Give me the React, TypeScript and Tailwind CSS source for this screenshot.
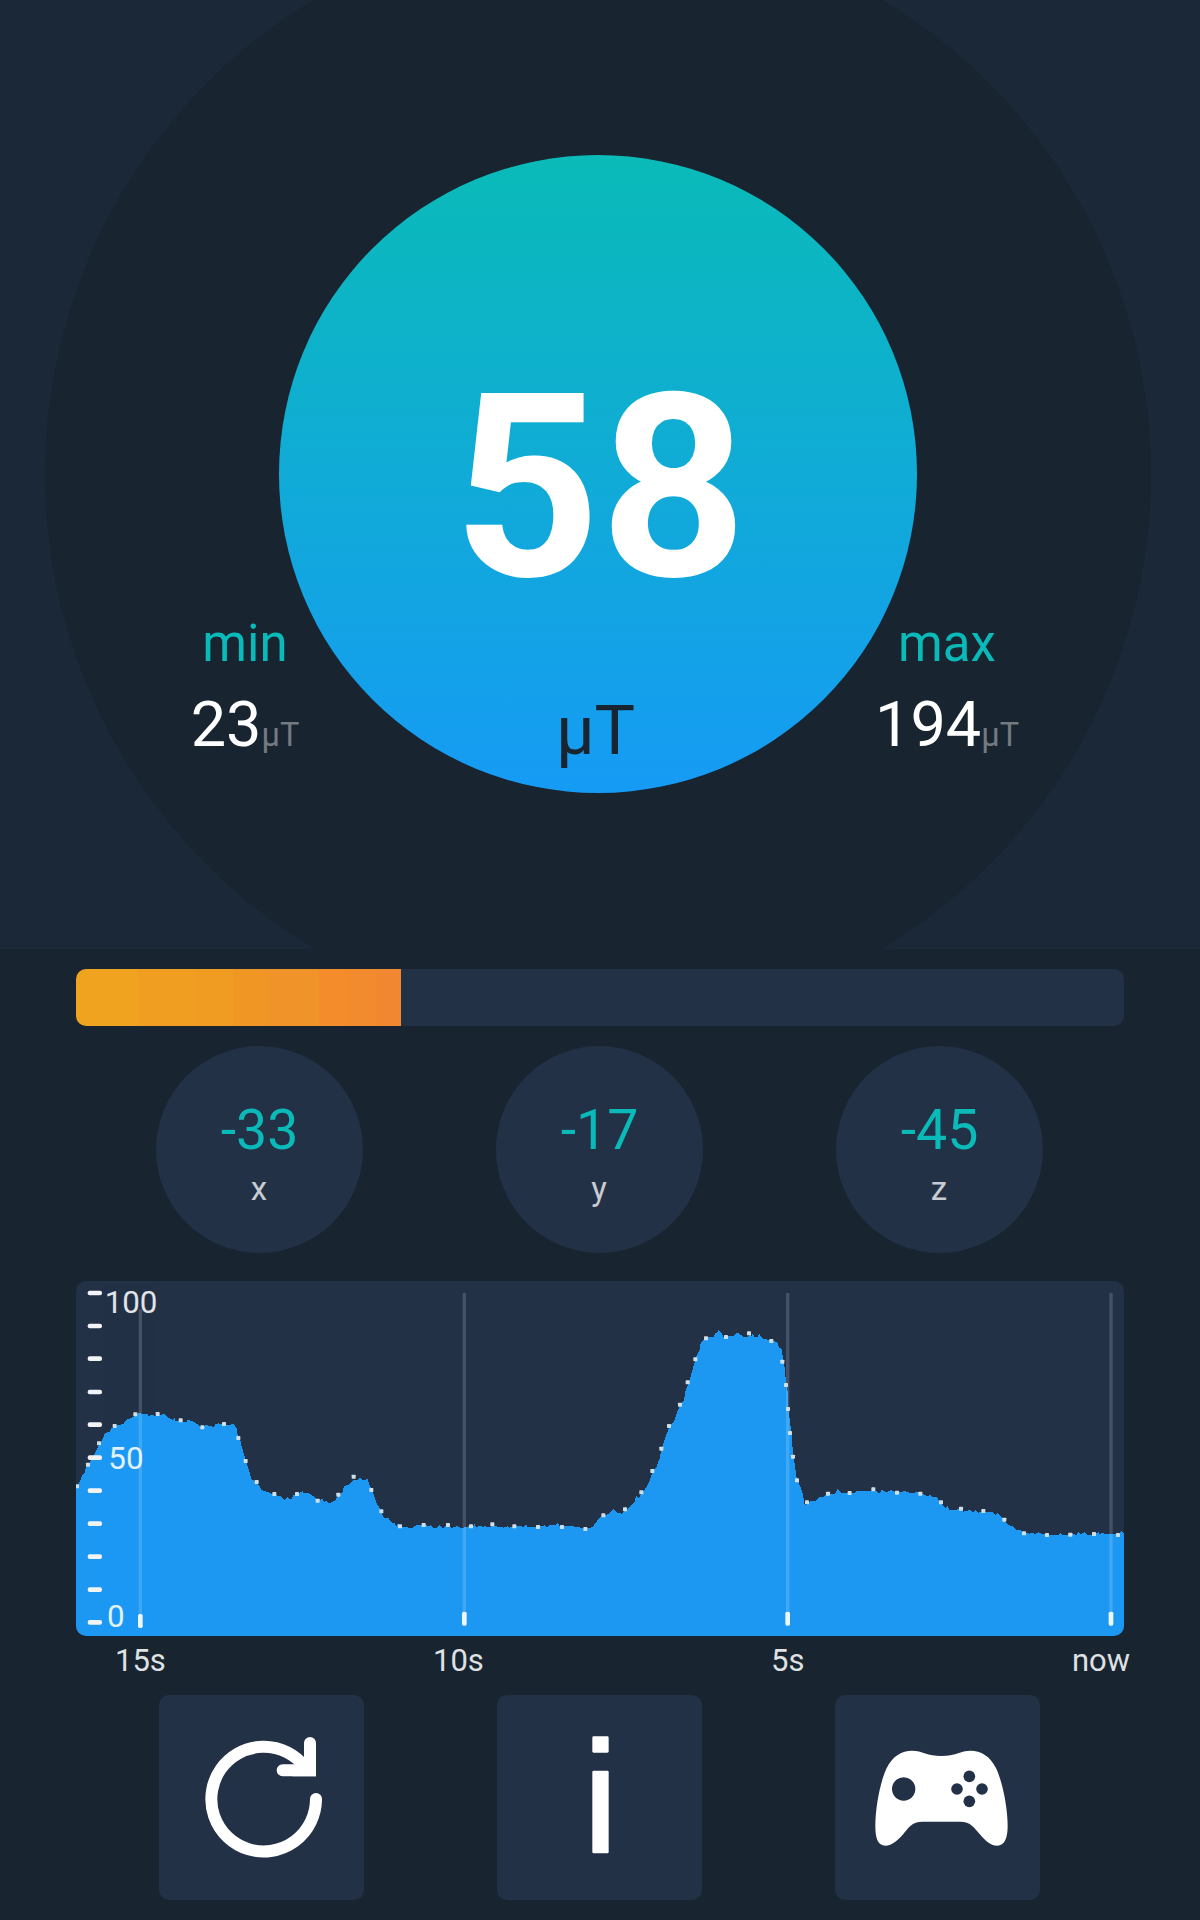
import React from "react";

// Chart coordinates use three units per CSS pixel.
const CHART_TOP = 33;
const CHART_BOTTOM = 1098;
const CHART_LEFT = 48;
const CHART_RIGHT = 3192;

const curve: number[][] = [
  [48, 650], [60, 635], [66, 616], [75, 608], [78, 588], [85, 583], [100, 562], [108, 542], [115, 530], [124, 514],
  [135, 490], [150, 484], [154, 476], [163, 468], [190, 462], [200, 449], [213, 445], [225, 438], [235, 430], [263, 432],
  [266, 440], [272, 434], [288, 438], [300, 436], [312, 432], [325, 443], [338, 450], [343, 443], [347, 453], [362, 455],
  [380, 456], [383, 449], [400, 455], [412, 463], [425, 472], [438, 464], [450, 470], [453, 466], [459, 473], [466, 463],
  [475, 460], [490, 464], [510, 466], [514, 461], [522, 463], [530, 475], [535, 508], [541, 512], [545, 530], [557, 570],
  [575, 628], [590, 635], [605, 660], [616, 663], [630, 669], [643, 675], [662, 678], [675, 690], [682, 680], [688, 688],
  [696, 686], [700, 675], [715, 672], [727, 663], [730, 668], [745, 669], [760, 678], [773, 692], [788, 686], [792, 695],
  [800, 694], [808, 700], [825, 691], [835, 678], [848, 665], [852, 648], [870, 642], [881, 630], [895, 629], [900, 621],
  [905, 629], [918, 629], [921, 624], [933, 656], [941, 672], [950, 700], [957, 712], [965, 730], [972, 745], [985, 744],
  [995, 758], [1005, 760], [1008, 770], [1014, 760], [1022, 770], [1038, 770], [1045, 773], [1058, 773], [1069, 766],
  [1100, 766], [1104, 770], [1112, 766], [1118, 773], [1131, 773], [1138, 766], [1150, 775], [1158, 768], [1176, 773],
  [1192, 768], [1204, 774], [1220, 771], [1234, 766], [1238, 773], [1244, 761], [1248, 772], [1262, 767], [1270, 773],
  [1276, 767], [1280, 773], [1300, 768], [1332, 773], [1344, 768], [1347, 773], [1365, 768], [1392, 770], [1398, 762],
  [1402, 770], [1430, 770], [1438, 764], [1442, 770], [1455, 766], [1460, 773], [1469, 765], [1488, 765], [1492, 759],
  [1500, 769], [1534, 768], [1558, 772], [1570, 776], [1592, 774], [1600, 768], [1608, 757], [1615, 748], [1624, 740],
  [1642, 734], [1656, 722], [1661, 718], [1670, 728], [1684, 731], [1696, 722], [1715, 705], [1724, 694], [1728, 676],
  [1736, 684], [1744, 672], [1756, 656], [1768, 636], [1778, 606], [1790, 589], [1799, 565], [1806, 532], [1816, 502],
  [1822, 486], [1830, 467], [1842, 453], [1850, 430], [1862, 404], [1872, 390], [1877, 360], [1885, 342], [1894, 312],
  [1904, 276], [1912, 252], [1919, 238], [1922, 219], [1932, 207], [1944, 202], [1961, 201], [1965, 190], [1971, 187],
  [1976, 179], [1984, 188], [1990, 200], [2018, 199], [2025, 193], [2031, 187], [2041, 194], [2050, 200], [2064, 200],
  [2069, 189], [2075, 198], [2078, 192], [2083, 200], [2093, 202], [2097, 190], [2107, 205], [2125, 210], [2151, 216],
  [2158, 233], [2165, 237], [2170, 272], [2175, 300], [2178, 343], [2183, 365], [2185, 420], [2190, 455], [2194, 490],
  [2199, 548], [2204, 582], [2209, 620], [2220, 648], [2228, 671], [2234, 705], [2241, 706], [2246, 695], [2268, 692],
  [2280, 680], [2290, 682], [2296, 674], [2308, 674], [2326, 670], [2332, 658], [2344, 668], [2383, 669], [2392, 662],
  [2434, 662], [2446, 662], [2459, 670], [2465, 659], [2478, 667], [2495, 660], [2500, 664], [2510, 669], [2535, 663],
  [2550, 669], [2578, 666], [2588, 672], [2604, 679], [2609, 674], [2618, 682], [2630, 680], [2640, 697], [2656, 713],
  [2662, 708], [2668, 720], [2686, 720], [2703, 715], [2710, 725], [2729, 720], [2740, 726], [2747, 720], [2754, 728],
  [2770, 725], [2797, 726], [2806, 736], [2812, 728], [2828, 744], [2845, 765], [2858, 768], [2870, 779], [2882, 779],
  [2888, 786], [2910, 791], [2918, 788], [2923, 792], [2936, 787], [2948, 793], [2994, 795], [3001, 790], [3010, 796],
  [3034, 792], [3050, 794], [3055, 786], [3062, 793], [3073, 786], [3083, 796], [3100, 794], [3116, 786], [3120, 794],
  [3126, 788], [3140, 793], [3178, 793], [3184, 781], [3192, 792],
];

const samples: number[][] = [
  [51, 649], [84, 584], [117, 520], [164, 468], [226, 433], [293, 432], [362, 451], [427, 472], [492, 462], [535, 504],
  [557, 573], [590, 636], [643, 672], [711, 672], [773, 692], [835, 674], [881, 620], [934, 660], [964, 724],
  [1020, 769], [1091, 765], [1164, 765], [1233, 769], [1297, 763], [1363, 769], [1434, 771], [1506, 771], [1576, 777],
  [1630, 736], [1695, 718], [1744, 667], [1777, 603], [1804, 536], [1827, 468], [1860, 404], [1883, 337], [1906, 268],
  [1938, 205], [1998, 201], [2067, 190], [2134, 213], [2167, 275], [2178, 345], [2184, 417], [2190, 489], [2199, 560],
  [2211, 631], [2241, 697], [2304, 671], [2369, 669], [2440, 658], [2511, 668], [2581, 671], [2643, 697], [2703, 716],
  [2770, 723], [2833, 749], [2892, 790], [2961, 795], [3031, 794], [3102, 792], [3174, 795],
];

const ticks = [69, 168, 266, 366, 464, 563, 662, 761, 860, 959, 1057];
const gridLines = [
  { x: 241, top: 118, mark: 1032 },
  { x: 1213, top: 69, mark: 1025 },
  { x: 2183, top: 69, mark: 1025 },
  { x: 3153, top: 69, mark: 1025 },
];

const areaPoints =
  `${CHART_LEFT},${CHART_BOTTOM} ` + curve.map(([x, y]) => `${x},${y}`).join(" ") + ` ${CHART_RIGHT},${CHART_BOTTOM}`;

function Extreme({ label, value, place }: { label: string; value: string; place: string }) {
  return (
    <div className={`absolute top-[618px] flex w-[200px] flex-col items-center ${place}`}>
      <div className="text-[51px] leading-[52px] text-[#0abab8]">{label}</div>
      <div className="mt-[23px] text-[63px] leading-[64px] whitespace-nowrap text-white">
        {value}
        <span className="text-[32.5px] leading-none text-[#747a81]">µT</span>
      </div>
    </div>
  );
}

function Hero() {
  return (
    <section className="relative flex h-[949px] justify-center overflow-hidden bg-[#1b2838] pr-1">
      <div className="absolute top-[-79px] left-[45px] size-[1106px] rounded-full bg-[#182430]" />
      <div className="relative mt-[155px] flex size-[638px] flex-col items-center rounded-full bg-[linear-gradient(180deg,#0abbb8,#169bf5)] pt-[206px]">
        <div className="ml-1 text-[256px] leading-[256px] font-bold text-white">58</div>
        <div className="mt-[80px] mr-[5px] text-[68px] leading-[68px] text-[#182430]">µT</div>
      </div>
      <Extreme label="min" value="23" place="left-[145px]" />
      <Extreme label="max" value="194" place="left-[847px]" />
    </section>
  );
}

function LevelBar() {
  return (
    <div className="mx-[76px] mt-5 h-[57px] overflow-hidden rounded-[10px] bg-[#233147]">
      <div className="h-full w-[325px] bg-[linear-gradient(90deg,#efa31f_0_62px,#ef9e21_62px_120px,#f09b22_120px_157px,#f09624_157px_190px,#f09328_190px_243px,#f48c2b_243px_274px,#f28a2e_274px_300px,#f28731_300px)]" />
    </div>
  );
}

function Axis({ label, value }: { label: string; value: string }) {
  return (
    <div className="flex size-[207px] flex-col items-center rounded-full bg-[#233147] pt-14">
      <div className="text-[55.5px] leading-[57px] text-[#0abab8]">{value}</div>
      <div className="mt-[13px] mr-px text-[33px] leading-[33px] text-[#c8cbd1]">{label}</div>
    </div>
  );
}

function Chart() {
  return (
    <div className="mt-7 ml-[76px] w-[1048px]">
      <svg
        className="block h-[355px] w-[1048px] rounded-[10px] bg-[#233147]"
        viewBox={`${CHART_LEFT} ${CHART_TOP} ${CHART_RIGHT - CHART_LEFT} ${CHART_BOTTOM - CHART_TOP}`}
      >
        <polygon points={areaPoints} fill="#1c98f3" shapeRendering="crispEdges" />
        {gridLines.map((line) => (
          <g key={line.x} fill="#fff">
            <rect x={line.x - 5} y={line.top} width="10" height={line.mark - line.top} opacity="0.16" />
            <rect x={line.x - 7} y={line.mark} width="14" height="42" rx="5" opacity="0.92" />
          </g>
        ))}
        {samples.map(([x, y]) => (
          <rect key={x} x={x - 6} y={y - 6} width="12" height="12" rx="2" fill="#cfdfe8" />
        ))}
        {ticks.map((y) => (
          <rect key={y} x="83" y={y - 7} width="43" height="14" rx="6" fill="#f1f3f6" />
        ))}
        <g fontSize="94" fill="#fff" opacity="0.87">
          <text x="134" y="129">100</text>
          <text x="145" y="598">50</text>
          <text x="141" y="1071">0</text>
        </g>
      </svg>
      <div className="mt-[9px] -mr-3 ml-[39px] flex h-8 items-center text-[31px] leading-8 text-[#dfe1e3]">
        <div className="w-[318px]">15s</div>
        <div className="w-[338px]">10s</div>
        <div className="w-[301px]">5s</div>
        <div>now</div>
      </div>
    </div>
  );
}

function ActionButton({ label, children }: { label: string; children: React.ReactNode }) {
  return (
    <button aria-label={label} className="size-[205px] rounded-[10px] bg-[#233147]">
      <svg viewBox="0 0 615 615" className="block size-[205px]">
        {children}
      </svg>
    </button>
  );
}

function Actions() {
  return (
    <div className="mt-[18px] ml-[159px] flex gap-[133px]">
      <ActionButton label="Reset">
        <g fill="none" stroke="#fff" strokeWidth="36" strokeLinecap="round">
          <path d="M471 313A157 157 0 1 1 438 216" strokeLinecap="butt" />
          <path d="M471 313v-1" />
          <path d="M453 144V226H371" />
        </g>
        <path d="M436 188L471 244H400Z" fill="#fff" />
      </ActionButton>
      <ActionButton label="Information">
        <rect x="286" y="124" width="49" height="49" rx="4" fill="#fff" />
        <rect x="286" y="227" width="49" height="248" rx="4" fill="#fff" />
      </ActionButton>
      <ActionButton label="Play">
        <g transform="translate(-45 -44)">
          <path
            fill="#fff"
            d="M166 438C166 380 181 304 199 265C218 226 246 211 276 211C307 211 322 227 364 227C406 227 421 211 452 211C482 211 510 226 529 265C547 304 563 380 563 438C563 474 553 496 532 496C510 496 494 478 479 461C463 443 453 424 420 424H308C275 424 265 443 250 461C235 478 216 496 196 496C174 496 166 474 166 438Z"
          />
          <g fill="#233147">
            <circle cx="251" cy="326" r="35" />
            <circle cx="448" cy="288" r="17.5" />
            <circle cx="411" cy="326" r="17.5" />
            <circle cx="486" cy="326" r="17.5" />
            <circle cx="448" cy="363" r="17.5" />
          </g>
        </g>
      </ActionButton>
    </div>
  );
}

export default function App() {
  return (
    <main className="h-[1920px] w-[1200px] overflow-hidden bg-[#182430] font-[Roboto,sans-serif]">
      <Hero />
      <LevelBar />
      <div className="mt-5 ml-[156px] flex gap-[133px]">
        <Axis label="x" value="-33" />
        <Axis label="y" value="-17" />
        <Axis label="z" value="-45" />
      </div>
      <Chart />
      <Actions />
    </main>
  );
}
